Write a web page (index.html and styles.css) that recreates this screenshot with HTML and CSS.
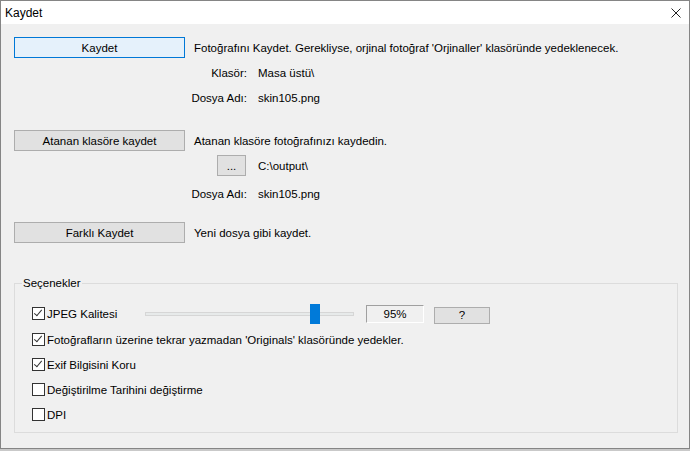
FILE: index.html
```html
<!DOCTYPE html>
<html lang="tr">
  <head>
    <meta charset="UTF-8" />
    <title>Kaydet</title>
    <link rel="stylesheet" href="styles.css">
  </head>
  <body>
    <div class="window">
      <div class="titlebar">
        <span class="title">Kaydet</span>
        <span class="close">
          <svg width="10" height="10" viewBox="0 0 10 10">
            <path d="M0.5 0.5 L9.5 9.5 M9.5 0.5 L0.5 9.5" stroke="#222" stroke-width="1" fill="none" />
          </svg>
        </span>
      </div>

      <div class="content">
        <!-- Kaydet -->
        <div class="section">
          <div class="row">
            <button class="btn btn-main btn-default">Kaydet</button>
            <span class="desc">Fotoğrafını Kaydet. Gerekliyse, orjinal fotoğraf 'Orjinaller' klasöründe yedeklenecek.</span>
          </div>
          <div class="row">
            <span class="detail-label">Klasör:</span>
            <span class="detail-value">Masa üstü\</span>
          </div>
          <div class="row">
            <span class="detail-label">Dosya Adı:</span>
            <span class="detail-value">skin105.png</span>
          </div>
        </div>

        <!-- Atanan klasöre kaydet -->
        <div class="section section-assigned">
          <div class="row">
            <button class="btn btn-main">Atanan klasöre kaydet</button>
            <span class="desc">Atanan klasöre fotoğrafınızı kaydedin.</span>
          </div>
          <div class="row">
            <span class="detail-label"><button class="btn btn-browse">...</button></span>
            <span class="detail-value">C:\output\</span>
          </div>
          <div class="row row-spaced">
            <span class="detail-label">Dosya Adı:</span>
            <span class="detail-value">skin105.png</span>
          </div>
        </div>

        <!-- Farklı Kaydet -->
        <div class="section section-saveas">
          <div class="row">
            <button class="btn btn-main">Farklı Kaydet</button>
            <span class="desc">Yeni dosya gibi kaydet.</span>
          </div>
        </div>

        <fieldset class="options">
          <legend>Seçenekler</legend>

          <div class="option option-quality">
            <label class="check-label">
              <span class="check checked"></span>JPEG Kalitesi
            </label>
            <div class="slider">
              <div class="slider-track"></div>
              <div class="slider-thumb" style="left: 165px"></div>
            </div>
            <span class="quality-value">95%</span>
            <button class="btn btn-help">?</button>
          </div>

          <div class="option">
            <label class="check-label">
              <span class="check checked"></span>Fotoğrafların üzerine tekrar yazmadan 'Originals' klasöründe yedekler.
            </label>
          </div>
          <div class="option">
            <label class="check-label">
              <span class="check checked"></span>Exif Bilgisini Koru
            </label>
          </div>
          <div class="option">
            <label class="check-label">
              <span class="check"></span>Değiştirilme Tarihini değiştirme
            </label>
          </div>
          <div class="option">
            <label class="check-label">
              <span class="check"></span>DPI
            </label>
          </div>
        </fieldset>
      </div>
    </div>
  </body>
</html>
```

FILE: styles.css
```css
body {
  margin: 0;
  background-color: #c9c9c9;
  font-family: "Liberation Sans", Arial, sans-serif;
  font-size: 11.5px;
  color: black;
}
.window {
  width: 688px;
  height: 447px;
  border: 1px solid #858585;
  background-color: #f0f0f0;
  overflow: hidden;
}
.titlebar {
  height: 23px;
  background-color: white;
  display: flex;
  align-items: center;
  justify-content: space-between;
  padding: 0 8px 0 4px;
}
.title {
  font-size: 12px;
  padding-top: 1px;
}
.close {
  display: flex;
}
.content {
  padding: 11px 0 0 13px;
}
.section-assigned {
  margin-top: 18px;
}
.section-saveas {
  margin-top: 14px;
}
.row {
  height: 25px;
  display: flex;
  align-items: center;
}
.row-spaced {
  margin-top: 3px;
}
.btn {
  font-family: inherit;
  font-size: 11.5px;
  color: black;
  background-color: #e1e1e1;
  border: 1px solid #adadad;
  padding: 0;
  margin: 0;
  height: 21px;
  box-sizing: border-box;
}
.btn-default {
  background-color: #e5f1fb;
  border-color: #0078d7;
}
.btn-main {
  width: 171px;
}
.desc {
  margin-left: 9px;
}
.detail-label {
  width: 233px;
  display: flex;
  justify-content: flex-end;
}
.detail-value {
  margin-left: 11px;
}
.btn-browse {
  width: 29px;
  margin-right: 1px;
}
.options {
  margin: 31px 0 0 0;
  width: 664px;
  height: 157px;
  box-sizing: border-box;
  border: 1px solid #dcdcdc;
  padding: 10px 0 0 17px;
}
.options legend {
  padding: 0 1px;
  margin-left: -10px;
  line-height: 14px;
}
.option {
  height: 25px;
  display: flex;
  align-items: center;
}
.option-quality {
  height: 27px;
}
.check-label {
  display: flex;
  align-items: center;
}
.option-quality .check-label {
  width: 113px;
}
.check {
  width: 13px;
  height: 13px;
  box-sizing: border-box;
  border: 1px solid #333;
  background-color: white;
  margin-right: 2px;
  position: relative;
}
.check.checked::after {
  content: "";
  position: absolute;
  left: 3px;
  top: 0px;
  width: 3px;
  height: 7px;
  border: solid #333;
  border-width: 0 1px 1px 0;
  transform: rotate(40deg);
}
.slider {
  width: 209px;
  height: 20px;
  position: relative;
  display: flex;
  align-items: center;
}
.slider-track {
  width: 100%;
  height: 4px;
  box-sizing: border-box;
  background-color: #e7eaea;
  border: 1px solid #d6d6d6;
}
.slider-thumb {
  position: absolute;
  top: 0;
  width: 10px;
  height: 20px;
  background-color: #007ad9;
}
.quality-value {
  margin-left: 12px;
  width: 58px;
  height: 18px;
  box-sizing: border-box;
  border: 1px solid;
  border-color: #a0a0a0 #ffffff #ffffff #a0a0a0;
  display: flex;
  align-items: center;
  justify-content: center;
}
.btn-help {
  margin-left: 10px;
  width: 56px;
  height: 17px;
  margin-top: 3px;
}
```
